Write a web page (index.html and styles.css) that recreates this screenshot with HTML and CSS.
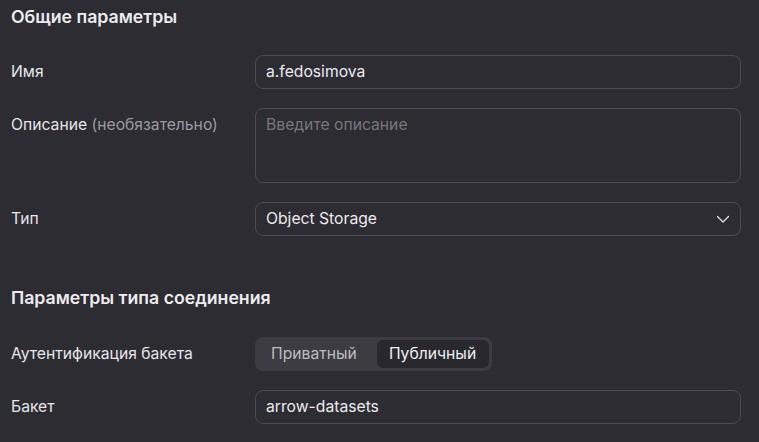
FILE: index.html
```html
<!DOCTYPE html>
<html lang="ru">
<head>
<meta charset="utf-8">
<link rel="stylesheet" href="styles.css">
</head>
<body>
<div class="page">
  <h2 class="section-title">Общие параметры</h2>
  <div class="form">
    <div class="row">
      <div class="label">Имя</div>
      <div class="control"><div class="input">a.fedosimova</div></div>
    </div>
    <div class="row row-top">
      <div class="label">Описание <span class="hint">(необязательно)</span></div>
      <div class="control"><div class="textarea placeholder">Введите описание</div></div>
    </div>
    <div class="row">
      <div class="label">Тип</div>
      <div class="control">
        <div class="input select">
          <span>Object Storage</span>
          <svg class="chevron" width="14" height="14" viewBox="0 0 14 14"><path d="M1.5 4.5l5.5 5.5 5.5-5.5" fill="none" stroke="#e6e6e9" stroke-width="1.2" stroke-linecap="round" stroke-linejoin="round"/></svg>
        </div>
      </div>
    </div>
  </div>
  <h2 class="section-title second">Параметры типа соединения</h2>
  <div class="form">
    <div class="row">
      <div class="label">Аутентификация бакета</div>
      <div class="control">
        <div class="segmented">
          <div class="seg">Приватный</div>
          <div class="seg active">Публичный</div>
        </div>
      </div>
    </div>
    <div class="row">
      <div class="label">Бакет</div>
      <div class="control"><div class="input">arrow-datasets</div></div>
    </div>
  </div>
</div>
</body>
</html>
```
FILE: styles.css
```css
* { box-sizing: border-box; }
html, body { margin: 0; padding: 0; background: #2d2c33; }
body {
  font-family: Inter, "Noto Sans", sans-serif;
  color: #e9e8ec;
  font-size: 15.7px;
}
.page { padding: 5px 18px 0 11px; }
.section-title {
  margin: 0;
  font-size: 17.7px;
  font-weight: 600;
  line-height: 24px;
  color: #ecebef;
}
.section-title.second { margin-top: 50px; }
.form {
  display: flex;
  flex-direction: column;
  gap: 19px;
  margin-top: 26px;
}
.section-title.second + .form { margin-top: 27px; }
.row { display: flex; align-items: center; }
.row-top { align-items: flex-start; }
.label {
  width: 244px;
  flex: none;
  line-height: 34px;
  color: #e6e5ea;
}
.hint { color: #9b9aa1; }
.control { flex: 1; }
.input, .textarea {
  border: 1px solid #4b4a51;
  border-radius: 8px;
  padding: 0 10px;
  height: 34px;
  line-height: 32px;
  color: #eceaef;
}
.textarea { height: 75px; line-height: 32px; }
.placeholder { color: #77767d; }
.select { display: flex; justify-content: space-between; align-items: center; }
.chevron { margin-right: 0; }
.segmented {
  display: inline-flex;
  background: #3d3c43;
  border-radius: 8px;
  padding: 3px;
  height: 34px;
}
.seg {
  padding: 0 20px 0 13px;
  line-height: 28px;
  color: #bdbcc2;
  border-radius: 6px;
}
.seg.active {
  background: #29282e;
  color: #efeef2;
  padding: 0 13px 0 12px;
}
```
